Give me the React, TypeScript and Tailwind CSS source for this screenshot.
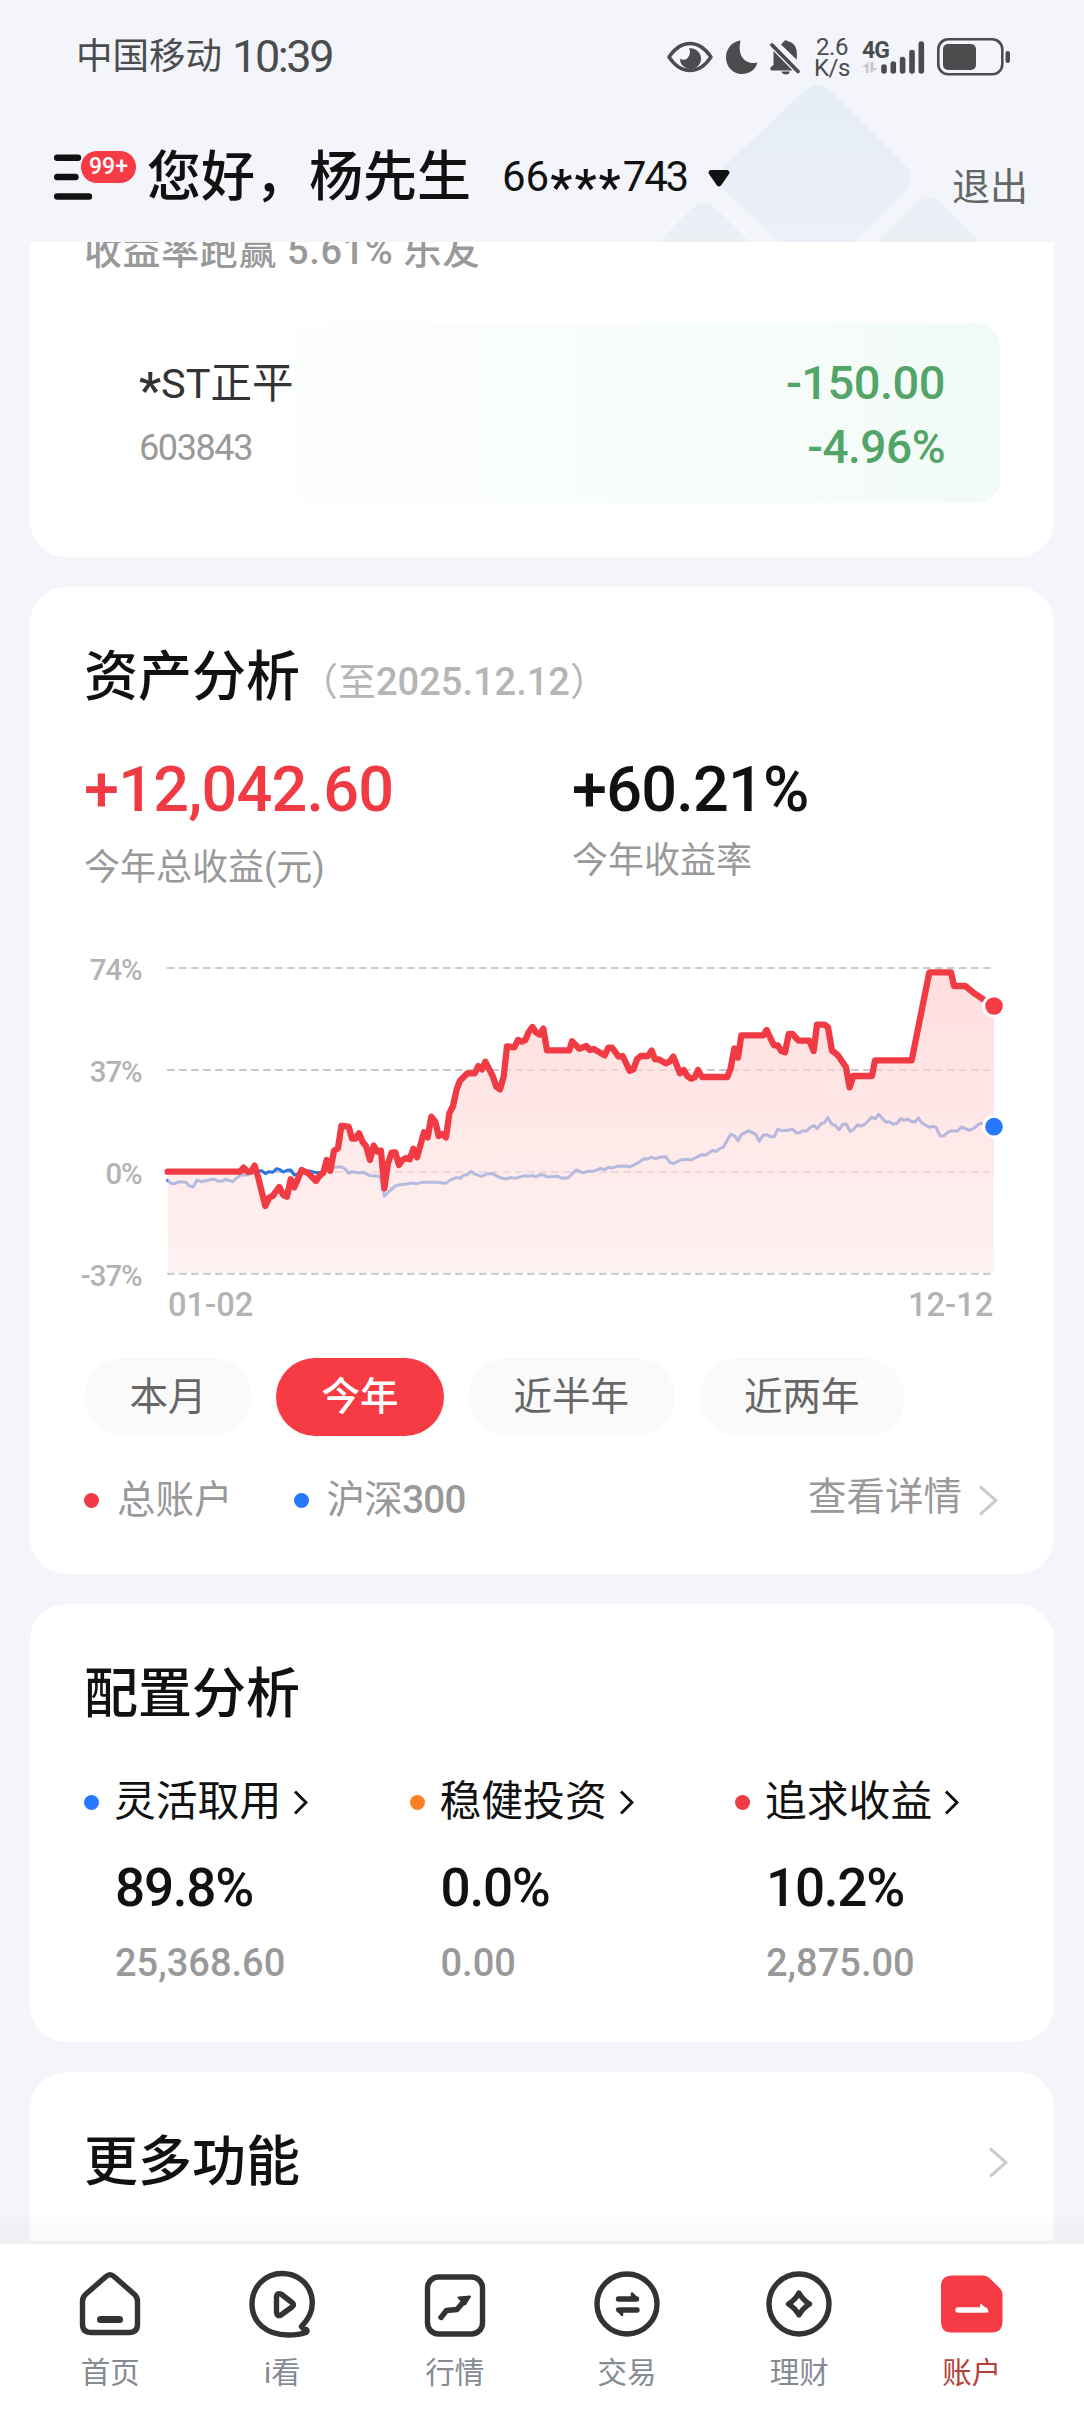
import type { JSX, ReactNode } from 'react'

const PERIODS = [
  { label: '本月', active: false },
  { label: '今年', active: true },
  { label: '近半年', active: false },
  { label: '近两年', active: false },
]

const ALLOCATIONS = [
  { name: '灵活取用', percent: '89.8%', amount: '25,368.60', dot: 'bg-[#2878ff]' },
  { name: '稳健投资', percent: '0.0%', amount: '0.00', dot: 'bg-[#fb8024]' },
  { name: '追求收益', percent: '10.2%', amount: '2,875.00', dot: 'bg-[#f03b45]' },
]

// Chart space: 3 units per pixel
const ACCOUNT_LINE =
  '323,725 540,725 551,713 563,725 573,725 584,707 594,740 616,828 628,802 638,798 658,771 670,795 681,800 692,748 703,772 725,720 745,730 768,753 778,738 790,728 800,690 811,722 822,662 834,655 844,588 866,590 876,626 886,626 897,610 908,636 918,648 930,690 941,647 952,665 963,662 973,775 984,700 995,668 1006,667 1017,705 1027,690 1038,684 1049,688 1060,656 1071,682 1092,607 1103,622 1114,560 1126,575 1136,618 1147,612 1158,622 1168,550 1179,528 1190,478 1200,452 1222,430 1244,430 1255,408 1266,418 1276,395 1298,438 1309,470 1320,478 1331,440 1341,349 1363,352 1374,330 1385,335 1396,330 1406,306 1417,291 1428,307 1439,314 1450,296 1461,361 1528,361 1536,334 1558,356 1579,348 1590,360 1601,357 1634,376 1645,353 1656,353 1676,380 1688,378 1709,422 1720,418 1731,388 1742,378 1764,378 1775,362 1785,388 1796,388 1817,400 1828,395 1840,380 1860,430 1871,420 1882,438 1893,446 1904,442 1914,420 1926,441 2002,441 2012,415 2023,355 2034,383 2044,316 2110,316 2120,300 2132,326 2142,346 2153,346 2164,363 2175,367 2186,312 2197,312 2216,332 2248,332 2261,363 2271,284 2294,284 2304,292 2316,362 2327,370 2336,379 2358,412 2369,472 2380,438 2436,438 2445,391 2555,391 2608,127 2673,127 2682,168 2716,168 2740,188 2770,208 2802,228'

const INDEX_LINE =
  '320,748 333,760 345,761 357,755 378,757 388,768 400,770 411,750 422,755 444,751 463,747 475,754 486,754 497,748 518,755 530,744 544,734 563,735 573,730 594,724 605,722 616,731 627,725 638,727 650,716 660,719 670,726 681,721 692,720 703,735 725,728 745,722 768,728 790,727 811,715 830,711 844,710 855,717 866,730 876,725 900,729 910,727 930,737 955,738 963,745 973,799 984,787 1006,768 1020,764 1040,762 1055,759 1070,761 1085,757 1130,757 1158,760 1168,752 1190,742 1200,745 1212,735 1222,734 1233,724 1244,732 1265,739 1283,731 1298,731 1320,743 1340,747 1353,742 1363,745 1395,737 1406,739 1417,736 1428,741 1439,734 1455,736 1460,741 1494,739 1504,745 1525,743 1548,720 1568,728 1585,724 1600,724 1622,715 1634,719 1645,712 1655,714 1672,709 1700,708 1709,711 1735,698 1752,686 1763,687 1774,681 1785,686 1805,681 1817,680 1828,696 1840,701 1862,690 1880,688 1893,690 1925,674 1937,676 1958,661 1968,665 1980,655 1990,652 2012,613 2023,617 2034,632 2044,614 2066,602 2088,614 2098,634 2109,616 2120,614 2132,620 2143,620 2153,597 2164,602 2186,601 2197,597 2208,608 2218,608 2228,602 2240,603 2251,592 2262,587 2272,596 2282,582 2293,578 2304,563 2315,582 2326,587 2337,599 2348,583 2359,582 2370,604 2381,598 2392,585 2403,588 2415,583 2435,562 2446,566 2456,553 2478,577 2488,575 2500,583 2511,580 2522,566 2533,571 2542,567 2554,574 2565,576 2575,564 2585,578 2608,592 2618,589 2628,592 2640,617 2651,618 2662,608 2672,603 2692,603 2705,591 2728,601 2740,596 2760,580 2802,590'

const GRID = [
  { y: 114, label: '74%' },
  { y: 420, label: '37%' },
  { y: 726, label: '0%' },
  { y: 1031, label: '-37%' },
]

function StatusBar(): JSX.Element {
  return (
    <div className="relative flex h-28 items-center pr-[73px] pl-[76px] text-[#4a4c4e]">
      <span className="mt-[2px] text-[36.500px] leading-10">中国移动</span>
      <span className="mt-[2px] ml-[10px] text-[45px] leading-10 tracking-[-2.400px]">10:39</span>
      <div className="mt-[2px] ml-auto flex items-center">
        {/* eye comfort */}
        <svg width="46" height="34" viewBox="0 0 46 34">
          <path d="M2 17C8 8 15 3.500 23 3.500S38 8 44 17C38 26 31 30.500 23 30.500S8 26 2 17Z" fill="none" stroke="currentColor" strokeWidth="3.400" strokeLinejoin="round" />
          <path d="M22 8.300a10.500 10.500 0 1 1-9 10.500c2.500 1.600 5.500 1.400 7.500-.8 2.700-2.900 3.200-6.700 1.500-9.700Z" fill="currentColor" />
        </svg>
        <svg className="ml-3" width="33" height="36" viewBox="0 0 33 36">
          <path d="M15.500 1.500C9 2 1 8 1 18.500 1 28 8 35 17 35c8 0 14-5 15.500-11.500-9 2.500-21-3-17-22Z" fill="currentColor" />
        </svg>
        {/* muted bell */}
        <svg className="ml-[11px]" width="32" height="36" viewBox="0 0 32 36">
          <path d="M12 5.500 15.500 1.800Q17 .8 18.500 2C24 3.500 27.800 7 27.800 14v6.800ZM4.500 12 23.500 31.500H2.500Q.5 30.500 1.500 28.500L4.500 26ZM12.500 32.500h8.500q-.8 3-4.200 3t-4.300-3Z" fill="currentColor" />
          <path d="M3 6 29 32.500" stroke="currentColor" strokeWidth="3.800" strokeLinecap="round" />
        </svg>
        <div className="ml-[13px] flex w-9 flex-col items-center gap-px text-[24px] leading-[20px] tracking-[-0.500px]">
          <span className="h-5">2.6</span>
          <span className="h-5">K/s</span>
        </div>
        <div className="ml-[12px] flex items-end">
          <div className="w-[20px]">
            <div className="text-[23px] leading-[20px] font-bold tracking-[-1px]">4G</div>
            <svg width="16" height="14" viewBox="0 0 16 14" fill="#c6c8cc">
              <path d="M6.500 1v11H3.800V6H0ZM8.500 12V1h3v6H16Z" />
            </svg>
          </div>
          <svg className="-ml-px" width="44" height="36" viewBox="0 0 44 36" stroke="currentColor" strokeWidth="5.600" strokeLinecap="round">
            <path d="M3 28v4M12.300 25v7M21.600 20.500V32M31 13.500V32M40.300 5v27" />
          </svg>
        </div>
        <svg className="ml-3" width="74" height="38" viewBox="0 0 74 38">
          <rect x="1.300" y="1.300" width="64" height="35" rx="10" fill="none" stroke="currentColor" strokeWidth="2.600" />
          <rect x="6" y="6" width="33" height="26" rx="5" fill="currentColor" />
          <rect x="68.500" y="13" width="4.500" height="12" rx="2.200" fill="currentColor" />
        </svg>
      </div>
    </div>
  )
}

function Header(): JSX.Element {
  return (
    <header className="relative h-[242px] shrink-0">
      <svg className="absolute inset-0" width="1084" height="242" viewBox="0 0 1084 242">
        <defs>
          <linearGradient id="gem" gradientUnits="userSpaceOnUse" x1="0" y1="85" x2="0" y2="260">
            <stop offset="0" stopColor="#e5edf7" />
            <stop offset="1" stopColor="#edf0f7" />
          </linearGradient>
          <linearGradient id="gemSmall" gradientUnits="userSpaceOnUse" x1="0" y1="195" x2="0" y2="245">
            <stop offset="0" stopColor="#eaeff8" />
            <stop offset="1" stopColor="#ebf0f5" />
          </linearGradient>
        </defs>
        <path d="M804 91Q817.500 79 831 91L905 165Q917 178.500 905 192L831 266Q817.500 278 804 266L726 192Q714 178.500 726 165Z" fill="url(#gem)" />
        <path d="M658 242 692 208Q704 198 716 208L750 242ZM877 242 917 202Q929 192 941 202L981 242Z" fill="url(#gemSmall)" />
      </svg>
      <StatusBar />
      <div className="relative flex h-[130px] items-center pl-[54px] text-[#111]">
        <div className="relative h-[46px] w-[93px]">
          <svg width="40" height="46" viewBox="0 0 40 46" stroke="#111" strokeWidth="6.400" strokeLinecap="round">
            <path d="M3.200 3.700H24M3.200 23H21.500M3.200 42.500H35" />
          </svg>
          <span className="absolute -top-[4px] left-[26px] flex h-[34px] w-[57px] items-center justify-center rounded-full border border-[#f4f5fa] bg-[#f73b44] text-[23px] font-medium text-white">
            99+
          </span>
        </div>
        <h1 className="mt-px text-[54px] leading-[60px] font-medium">您好，杨先生</h1>
        <div className="ml-[31px] flex h-[50px] w-[185px] text-[42px] leading-[50px]">
          <span>66</span>
          <span className="w-[74px] pt-[11px] pl-px text-[50px] font-medium tracking-[2px]">***</span>
          <span className="tracking-[-2.200px]">743</span>
        </div>
        <svg className="mt-[2px] ml-[21px]" width="22" height="17" viewBox="0 0 22 17">
          <path d="M2.500 0H19.500Q22.500 1 21 4L13 15.500Q11 17.500 9 15.500L1 4Q-.5 1 2.500 0Z" fill="#111" />
        </svg>
        <button type="button" className="mt-5 mr-[56px] ml-auto text-[38px] leading-10 text-[#666]">退出</button>
      </div>
    </header>
  )
}

function Card({ className, children }: { className: string; children: ReactNode }): JSX.Element {
  return <section className={`mx-[30px] shrink-0 bg-white px-[54px] ${className}`}>{children}</section>
}

function Chevron({ className, width, height, stroke }: { className: string; width: number; height: number; stroke: number }): JSX.Element {
  return (
    <svg className={className} width={width} height={height} viewBox={`0 0 ${width} ${height}`} fill="none" stroke="currentColor" strokeWidth={stroke}>
      <path d={`M2 1.500 ${width - 2} ${height / 2} 2 ${height - 1.5}`} />
    </svg>
  )
}

function RankingCard(): JSX.Element {
  return (
    <Card className="-mt-3 h-[327px] rounded-b-[36px]">
      <p className="h-10 pt-px text-[38px] leading-10 font-medium tracking-[0.600px] text-[#999]">收益率跑赢 5.61% 乐友</p>
      <div className="mt-[53px] flex h-[180px] justify-between rounded-3xl bg-linear-to-r from-white from-10% to-[#f2fbf7] pr-[55px] pl-[55px] pt-[35px]">
        <div>
          <div className="flex h-[50px] text-[41.500px] leading-[50px] text-[#333]">
            <span className="w-[22px] pt-[8px] text-[50px] font-medium">*</span>
            <span className="mt-px">ST正平</span>
          </div>
          <div className="mt-[15px] text-[36px] leading-[50px] tracking-[-1.400px] text-[#999]">603843</div>
        </div>
        <div className="text-right leading-[50px] font-medium text-[#53a567]">
          <div className="text-[47px] tracking-[-0.500px]">-150.00</div>
          <div className="mt-[14px] text-[46px] tracking-[-0.500px]">-4.96%</div>
        </div>
      </div>
    </Card>
  )
}

function ProfitChart(): JSX.Element {
  return (
    <svg className="-ml-6" width="980" height="400" viewBox="0 0 2940 1200">
      <defs>
        <linearGradient id="area" gradientUnits="userSpaceOnUse" x1="0" y1="127" x2="0" y2="1031">
          <stop offset="0" stopColor="#ffcccc" />
          <stop offset="1" stopColor="#ffebeb" />
        </linearGradient>
      </defs>
      <g fill="#b3b3b3" fontSize="88" fontWeight="500" letterSpacing="-3" textAnchor="end">
        {GRID.map((line) => (
          <text key={line.label} x="245" y={line.y + 36}>{line.label}</text>
        ))}
      </g>
      <g stroke="#c8c8c8" strokeWidth="6" strokeDasharray="23 13">
        {GRID.map((line) => (
          <path key={line.label} d={`M321 ${line.y}H2794`} />
        ))}
      </g>
      <polyline points={INDEX_LINE} fill="none" stroke="#2b72dd" strokeWidth="9" strokeLinejoin="round" />
      <polygon points={`323,1028 ${ACCOUNT_LINE} 2802,1028`} fill="url(#area)" fillOpacity="0.65" />
      <polyline points={ACCOUNT_LINE} fill="none" stroke="#f03b45" strokeWidth="19" strokeLinejoin="round" strokeLinecap="round" />
      <circle cx="2802" cy="228" r="31" fill="#f73b44" stroke="#fff" strokeWidth="9" />
      <circle cx="2802" cy="590" r="31" fill="#2878ff" stroke="#fff" strokeWidth="9" />
      <g fill="#b3b3b3" fontSize="98" fontWeight="500">
        <text x="324" y="1158">01-02</text>
        <text x="2800" y="1158" textAnchor="end">12-12</text>
      </g>
    </svg>
  )
}

function AssetCard(): JSX.Element {
  return (
    <Card className="mt-[30px] h-[987px] rounded-[36px] pt-[62px]">
      <div className="flex h-[58px] items-center">
        <h2 className="text-[54px] leading-[58px] font-medium text-[#111]">资产分析</h2>
        <span className="mt-[8px] text-[38px] leading-10 text-[#b5b5b5]">（至<span className="font-medium">2025.12.12</span>）</span>
      </div>
      <div className="mt-[53px] grid grid-cols-[488px_1fr]">
        <div>
          <div className="text-[63px] leading-[60px] font-medium tracking-[-0.800px] text-[#f03b45]">+12,042.60</div>
          <div className="mt-[28px] text-[36px] leading-10 text-[#999]">今年总收益(元)</div>
        </div>
        <div>
          <div className="text-[63px] leading-[60px] font-medium tracking-[-0.800px] text-[#111]">+60.21%</div>
          <div className="mt-[21px] text-[36px] leading-10 text-[#999]">今年收益率</div>
        </div>
      </div>
      <div className="mt-[42px] h-[400px] w-[956px]">
        <ProfitChart />
      </div>
      <div className="mt-[28px] flex gap-6">
        {PERIODS.map((period) => (
          <button
            key={period.label}
            type="button"
            className={`h-[78px] rounded-full px-[45.500px] text-[38.500px] leading-[74px] ${period.active ? 'bg-[#f73b44] font-medium text-white' : 'bg-[#fafafa] text-[#666]'}`}
          >
            {period.label}
          </button>
        ))}
      </div>
      <div className="mt-[44px] flex h-10 items-center text-[38.500px] leading-10 text-[#999]">
        <span className="size-[15px] rounded-full bg-[#f03b45]" />
        <span className="ml-[18px]">总账户</span>
        <span className="ml-[61px] size-[15px] rounded-full bg-[#2878ff]" />
        <span className="ml-[18px] tracking-[-0.700px]">沪深<span className="font-medium">300</span></span>
        <span className="-mt-[6px] ml-auto">查看详情</span>
        <Chevron className="mr-[2px] ml-[16px] text-[#ccc]" width={20} height={31} stroke={3} />
      </div>
    </Card>
  )
}

function AllocationCard(): JSX.Element {
  return (
    <Card className="mt-[30px] h-[438px] rounded-[36px] pt-[62px]">
      <h2 className="text-[54px] leading-[58px] font-medium text-[#111]">配置分析</h2>
      <div className="mt-[53px] flex">
        {ALLOCATIONS.map((item) => (
          <div key={item.name} className="w-[325.500px] shrink-0">
            <div className="flex h-[50px] items-center text-[#111]">
              <span className={`size-[15px] rounded-full ${item.dot}`} />
              <span className="ml-[15px] text-[41.800px] leading-[50px]">{item.name}</span>
              <Chevron className="ml-[12px]" width={15} height={25} stroke={3} />
            </div>
            <div className="mt-[35px] ml-[31px] text-[53px] leading-[52px] font-medium tracking-[-1.200px] text-[#111]">{item.percent}</div>
            <div className="mt-[28px] ml-[31px] text-[38px] leading-[42px] font-medium text-[#999]">{item.amount}</div>
          </div>
        ))}
      </div>
    </Card>
  )
}

function TabIcon({ name }: { name: string }): JSX.Element {
  return (
    <svg width="72" height="72" viewBox="0 0 72 72" fill="none" stroke="#333" strokeWidth="5.400" strokeLinejoin="round" strokeLinecap="round">
      {name === '首页' && (
        <>
          <path d="M32 8.500Q36 5 40 8.500L60 26Q63.500 29 63.500 33V56Q63.500 64.500 55 64.500H17Q8.500 64.500 8.500 56V33Q8.500 29 12 26Z" />
          <path d="M26.500 51.500H45.500" strokeWidth="7" />
        </>
      )}
      {name === 'i看' && (
        <>
          <path d="M55.500 58.500C65 49 68 38 65.300 27 62 14 50 5.500 36 5.500 19 5.500 6 19 6 36c0 18 14 31 36 31q11 0 18-2.500 2-1.500.3-3-4-.5-4.800-3" />
          <path d="M30.500 28.500Q31 24.500 35 26L46 34.500Q49 36.500 46 39L35 47Q31 49 30.500 44.500Z" />
        </>
      )}
      {name === '行情' && (
        <>
          <rect x="8.500" y="9" width="55" height="57" rx="11" />
          <path d="M22 49.500 27.500 42.500 38 41.500 46 32" />
          <path d="M39.500 29.500 51 28.500 46 36.500Z" fill="#333" strokeWidth="2" />
        </>
      )}
      {name === '交易' && (
        <>
          <circle cx="36" cy="36" r="30" />
          <path d="M27.500 31H45.500M46 42H28" />
          <path d="M41 29V25.500L46.500 31ZM31 44V47L26 41Z" fill="#333" strokeWidth="2.500" />
        </>
      )}
      {name === '理财' && (
        <>
          <circle cx="36" cy="36" r="30" />
          <path d="M36 25Q40 32 46.500 36 40 40 36 47 32 40 25.500 36 32 32 36 25Z" />
        </>
      )}
      {name === '账户' && (
        <>
          <path d="M17 7.500H47Q51 7.500 54 10.500L63 19.500Q66.500 22.500 66.500 26.500V53Q66.500 64.500 56 64.500H15Q5 64.500 5 53V18Q5 7.500 17 7.500Z" fill="#f73b44" stroke="none" />
          <path d="M22 42H49" stroke="#fff" />
          <path d="M45 41.500V37L51.500 43.500Z" fill="#fff" stroke="#fff" strokeWidth="2" />
        </>
      )}
    </svg>
  )
}

function TabBar(): JSX.Element {
  return (
    <nav className="relative flex h-[171px] shrink-0 border-t-[3px] border-[#f0f0f0] bg-white px-6 pt-6">
      <div className="absolute -top-9 left-0 h-[33px] w-full bg-linear-to-b from-black/0 to-black/[0.025]" />
      {['首页', 'i看', '行情', '交易', '理财', '账户'].map((name) => (
        <div key={name} className="flex w-[172.300px] flex-col items-center">
          <TabIcon name={name} />
          <span className={`mt-[13px] text-[29.500px] leading-[40px] ${name === '账户' ? 'text-[#b8403a]' : 'text-[#868a93]'}`}>{name}</span>
        </div>
      ))}
    </nav>
  )
}

export default function App(): JSX.Element {
  return (
    <div className="flex h-[2412px] w-[1084px] flex-col overflow-hidden bg-[#f4f5fa] font-[Roboto,'Noto_Sans_CJK_SC',sans-serif]">
      <Header />
      <main className="flex min-h-0 flex-1 flex-col overflow-hidden">
        <RankingCard />
        <AssetCard />
        <AllocationCard />
        <Card className="mt-[30px] h-[240px] rounded-[36px] pt-[62px]">
          <div className="flex h-[58px] items-center justify-between">
            <h2 className="text-[54px] leading-[58px] font-medium text-[#111]">更多功能</h2>
            <Chevron className="-mt-[2px] -mr-2 text-[#ccc]" width={20} height={31} stroke={3} />
          </div>
        </Card>
      </main>
      <TabBar />
    </div>
  )
}
